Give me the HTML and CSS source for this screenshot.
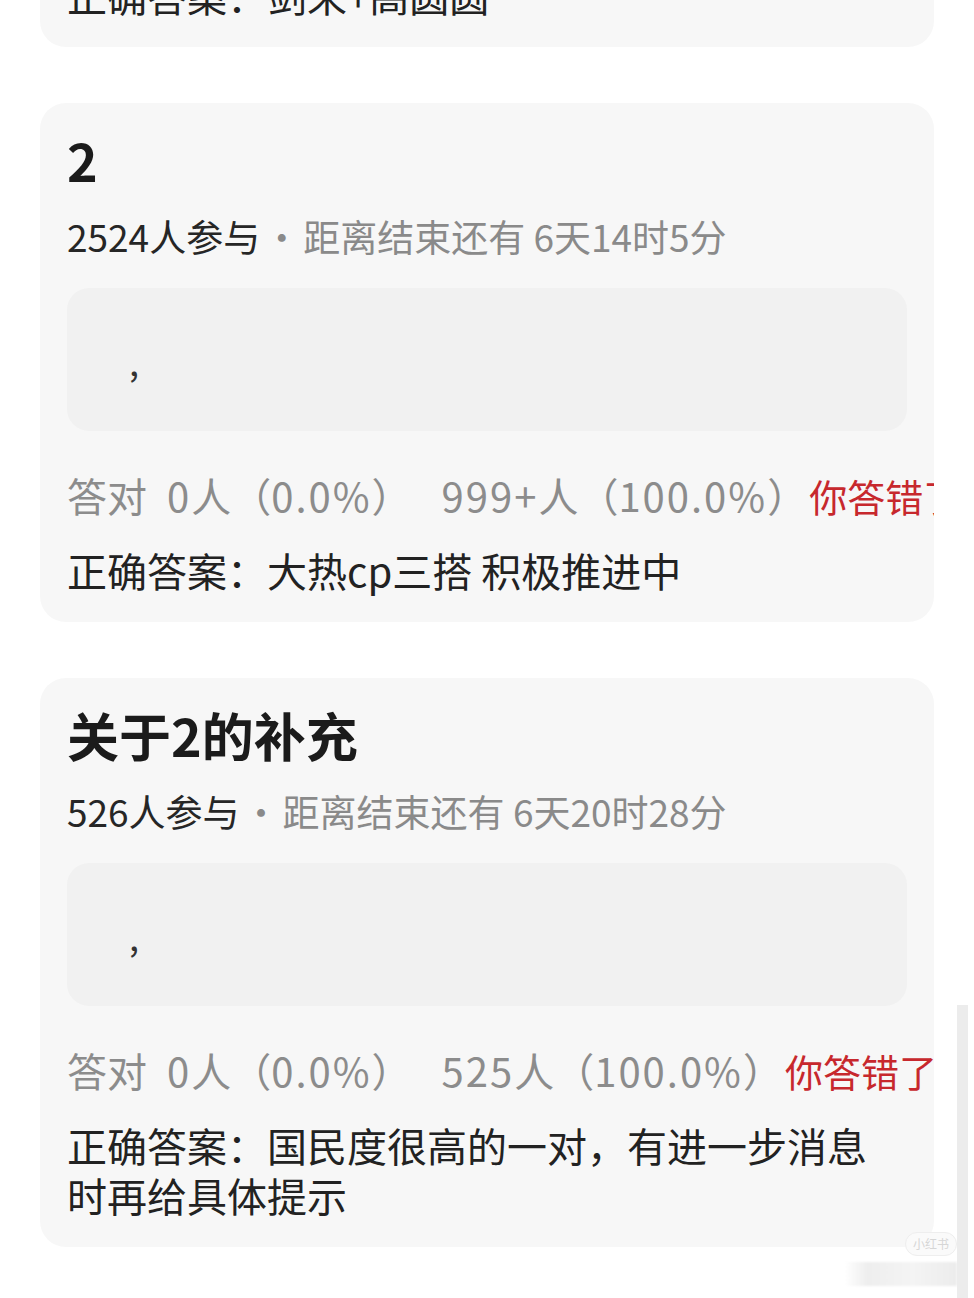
FILE: index.html
```html
<!DOCTYPE html>
<html lang="zh-CN">
<head>
    <meta charset="UTF-8">
    <meta name="viewport" content="width=device-width, initial-scale=1.0">
    <title>竞猜</title>
    <link rel="stylesheet" href="styles.css">
</head>
<body>
    <div id="page">
        <div class="feed">
            <!-- 上一条，只露出底部 -->
            <div class="card card-tail">
                <div class="answer">正确答案：剑来+高圆圆</div>
            </div>

            <div class="card">
                <div class="title">2</div>
                <div class="meta"><span class="joined">2524人参与</span><span class="dot">·</span>距离结束还有 6天14时5分</div>
                <div class="option">,</div>
                <div class="stats">
                    <span>答对</span><span class="gap"><span class="num">0</span>人（<span class="num">0.0%</span>）</span><span class="gap-wide"><span class="num">999+</span>人（<span class="num">100.0%</span>）</span><span class="wrong">你答错了</span>
                </div>
                <div class="answer">正确答案：大热cp三搭 积极推进中</div>
            </div>

            <div class="card">
                <div class="title">关于2的补充</div>
                <div class="meta"><span class="joined">526人参与</span><span class="dot">·</span>距离结束还有 6天20时28分</div>
                <div class="option">,</div>
                <div class="stats">
                    <span>答对</span><span class="gap"><span class="num">0</span>人（<span class="num">0.0%</span>）</span><span class="gap-wide"><span class="num">525</span>人（<span class="num">100.0%</span>）</span><span class="wrong">你答错了</span>
                </div>
                <div class="answer">正确答案：国民度很高的一对，有进一步消息时再给具体提示</div>
            </div>
        </div>

        <!-- 右侧滚动条和水印 -->
        <div class="scroll-bar"></div>
        <div class="mark">小红书</div>
        <div class="mark-strip"></div>
    </div>
</body>
</html>
```

FILE: styles.css
```css
body{
    margin: 0;
    background: #fff;
    font-family: "Noto Sans CJK SC", "Noto Sans", sans-serif;
    color: #222;
}
#page{
    position: relative;
    width: 974px;
    height: 1298px;
    overflow: hidden;
}
.feed{
    display: flex;
    flex-direction: column;
    gap: 56px;
    margin: -30px 40px 0 40px;
}
.card{
    background: #f7f7f7;
    border-radius: 26px;
    padding: 26px 27px 27px 27px;
    overflow: hidden;
}
.card-tail{
    padding-top: 0;
    padding-bottom: 27px;
}
.title{
    font-size: 52px;
    font-weight: 700;
    line-height: 62px;
    color: #1b1b1b;
}
.meta{
    margin-top: 20px;
    font-size: 37px;
    line-height: 50px;
    color: #8a8a8a;
    white-space: nowrap;
}
.meta .joined{
    color: #262626;
}
.meta .dot{
    margin: 0 3px;
}
.option{
    margin-top: 27px;
    height: 143px;
    background: #f1f1f1;
    border-radius: 22px;
    display: flex;
    align-items: center;
    padding-left: 62px;
    font-size: 36px;
    color: #333;
}
.stats{
    margin-top: 38px;
    font-size: 40px;
    line-height: 53px;
    color: #8c8c8c;
    white-space: nowrap;
}
.stats .num{
    letter-spacing: 2px;
}
.stats .gap{
    margin-left: 20px;
}
.stats .gap-wide{
    margin-left: 30px;
}
.stats .wrong{
    margin-left: 2px;
    font-size: 38px;
    color: #c7282d;
}
.answer{
    margin-top: 23px;
    padding-right: 20px;
    font-size: 40px;
    line-height: 50px;
    color: #222;
}
.card-tail .answer{
    margin-top: 0;
}
.scroll-bar{
    position: absolute;
    left: 957px;
    top: 1005px;
    width: 11px;
    height: 293px;
    background: #ececec;
}
.mark{
    position: absolute;
    left: 905px;
    top: 1232px;
    padding: 2px 7px;
    border: 1px solid #eeeeee;
    border-radius: 12px;
    background: #fafafa;
    font-size: 12px;
    line-height: 18px;
    color: #d6d6d6;
}
.mark-strip{
    position: absolute;
    left: 845px;
    top: 1262px;
    width: 112px;
    height: 24px;
    background: linear-gradient(90deg, #fff, #eeeeee 20%, #f4f4f4 60%, #ececec);
    filter: blur(1px);
}
```
